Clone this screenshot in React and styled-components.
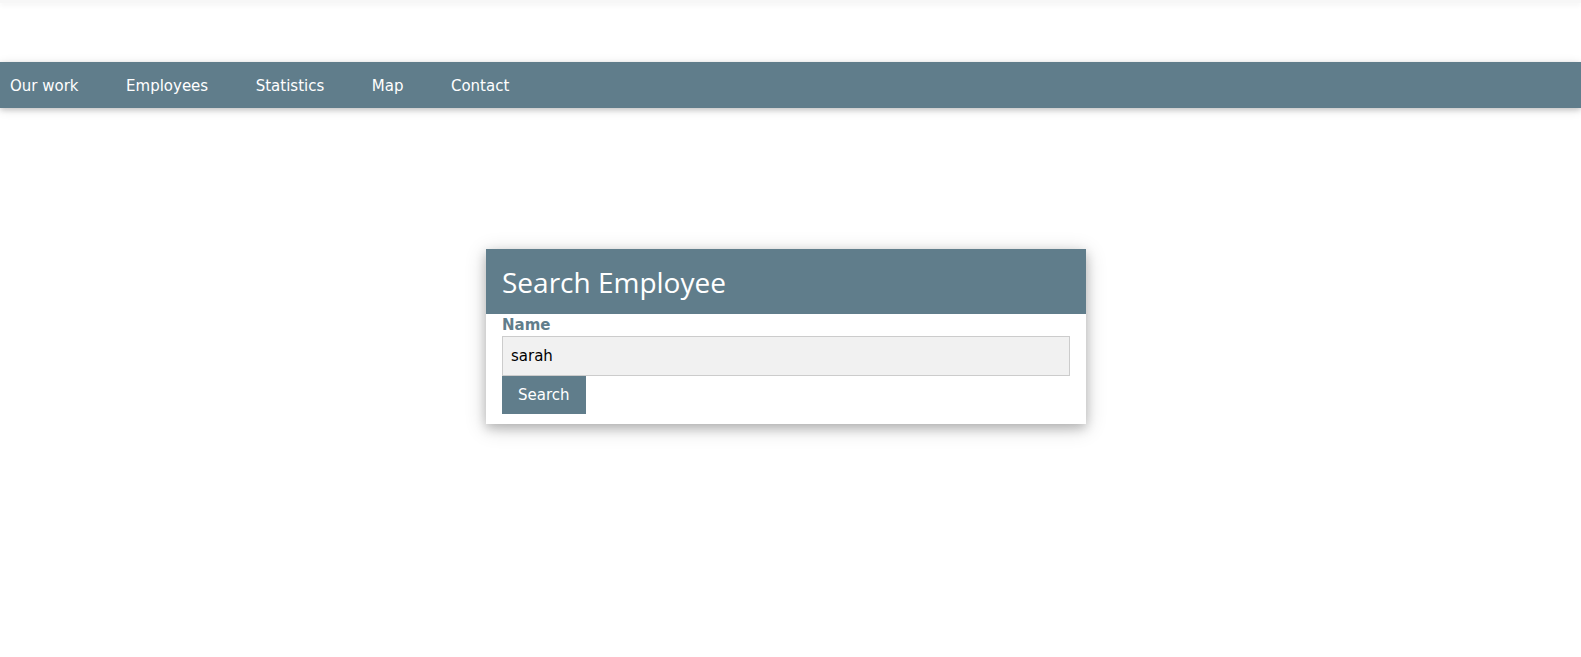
import React from "react";
import styled, { createGlobalStyle } from "styled-components";

const Global = createGlobalStyle`
  html, body {
    margin: 0;
    padding: 0;
    background: #fff;
    font-family: "DejaVu Sans", Verdana, sans-serif;
    font-size: 15px;
    line-height: 1.5;
  }
  * { box-sizing: border-box; }
`;

const BLUE_GREY = "#607d8b";

const Page = styled.div`
  min-height: 657px;
  display: flex;
  flex-direction: column;
`;

const TopStrip = styled.div`
  height: 3px;
  background: #f7f7f7;
  box-shadow: 0 2px 5px 0 rgba(0, 0, 0, 0.06);
`;

const NavBar = styled.nav`
  margin-top: 59px;
  height: 46px;
  background: ${BLUE_GREY};
  display: flex;
  align-items: center;
  gap: 47.5px;
  padding-left: 10px;
  box-shadow: 0 2px 5px 0 rgba(0, 0, 0, 0.16), 0 2px 10px 0 rgba(0, 0, 0, 0.12);
`;

const NavLink = styled.a`
  color: #fff;
  text-decoration: none;
  font-size: 15px;
  line-height: 22px;
  padding-top: 1px;
  cursor: pointer;
`;

const Main = styled.main`
  display: flex;
  justify-content: center;
  padding: 141px 9px 0 0;
`;

const Card = styled.section`
  width: 600px;
  background: #fff;
  box-shadow: 0 4px 10px 0 rgba(0, 0, 0, 0.2), 0 4px 20px 0 rgba(0, 0, 0, 0.19);
`;

const CardHeader = styled.header`
  height: 65px;
  background: ${BLUE_GREY};
  display: flex;
  align-items: center;
  padding: 2px 16px 0;
`;

const Title = styled.h2`
  margin: 0;
  color: #fff;
  font-family: "Open Sans", "Noto Sans", sans-serif;
  font-weight: 400;
  font-size: 28px;
  line-height: 45px;
`;

const Form = styled.form`
  display: flex;
  flex-direction: column;
  align-items: flex-start;
  padding: 0 16px 10px;
`;

const Label = styled.label`
  color: ${BLUE_GREY};
  font-weight: bold;
  font-size: 15px;
  line-height: 22px;
`;

const Input = styled.input`
  width: 100%;
  height: 40px;
  padding: 0 8px;
  border: 1px solid #ccc;
  background: #f1f1f1;
  font-family: "DejaVu Sans", Verdana, sans-serif;
  font-size: 15px;
  color: #000;
  outline: none;
`;

const Button = styled.button`
  height: 38px;
  padding: 0 16px;
  border: none;
  background: ${BLUE_GREY};
  color: #fff;
  font-family: "DejaVu Sans", Verdana, sans-serif;
  font-size: 15px;
  cursor: pointer;
`;

const links = ["Our work", "Employees", "Statistics", "Map", "Contact"];

export default function App() {
  return (
    <Page>
      <Global />
      <TopStrip />
      <NavBar>
        {links.map((l) => (
          <NavLink key={l}>{l}</NavLink>
        ))}
      </NavBar>
      <Main>
        <Card>
          <CardHeader>
            <Title>Search Employee</Title>
          </CardHeader>
          <Form onSubmit={(e) => e.preventDefault()}>
            <Label htmlFor="name">Name</Label>
            <Input id="name" defaultValue="sarah" />
            <Button type="submit">Search</Button>
          </Form>
        </Card>
      </Main>
    </Page>
  );
}
